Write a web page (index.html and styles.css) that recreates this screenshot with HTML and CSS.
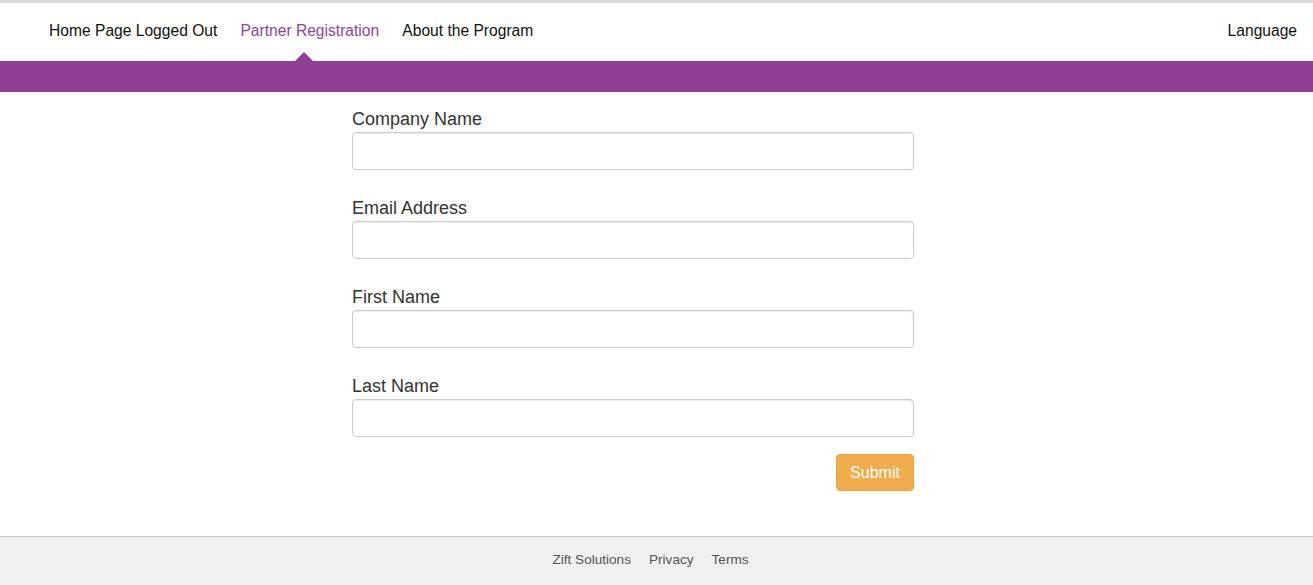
FILE: index.html
```html
<!DOCTYPE html>
<html lang="en">
<head>
<meta charset="utf-8">
<title>Partner Registration</title>
<link rel="stylesheet" href="styles.css">
</head>
<body>
<header class="topbar">
  <nav class="nav">
    <ul class="nav-left">
      <li><a class="nav-link" href="#">Home Page Logged Out</a></li>
      <li><a class="nav-link active" href="#">Partner Registration</a></li>
      <li><a class="nav-link" href="#">About the Program</a></li>
    </ul>
    <a class="nav-link lang" href="#">Language</a>
  </nav>
</header>
<div class="band"></div>
<main class="main">
  <form class="form">
    <div class="group">
      <label class="label" for="company">Company Name</label>
      <input class="input" id="company" type="text">
    </div>
    <div class="group">
      <label class="label" for="email">Email Address</label>
      <input class="input" id="email" type="email">
    </div>
    <div class="group">
      <label class="label" for="first">First Name</label>
      <input class="input" id="first" type="text">
    </div>
    <div class="group">
      <label class="label" for="last">Last Name</label>
      <input class="input" id="last" type="text">
    </div>
    <div class="actions">
      <button class="btn" type="button">Submit</button>
    </div>
  </form>
</main>
<footer class="footer">
  <a href="#">Zift Solutions</a>
  <a href="#">Privacy</a>
  <a href="#">Terms</a>
</footer>
</body>
</html>
```

FILE: styles.css
```css
* { box-sizing: border-box; }
html, body { margin: 0; padding: 0; }
body {
  font-family: "Liberation Sans", Arial, sans-serif;
  background: #fff;
  color: #333;
  width: 1313px;
  height: 585px;
  overflow: hidden;
}
a { text-decoration: none; }

.topbar {
  border-top: 3px solid #dcdcdc;
  height: 61px;
  background: #fff;
}
.nav {
  display: flex;
  align-items: stretch;
  justify-content: space-between;
  height: 58px;
  padding: 0 16px 0 37.5px;
}
.nav-left {
  display: flex;
  list-style: none;
  margin: 0;
  padding: 0;
}
.nav-link {
  position: relative;
  display: block;
  font-size: 15.6px;
  line-height: 56px;
  padding: 0 11.6px 2px;
  color: #111;
}
.nav-link.active { color: #8f4597; }
.nav-link.active::after {
  content: "";
  position: absolute;
  left: 50%;
  bottom: 0;
  margin-left: -15px;
  border-left: 9px solid transparent;
  border-right: 9px solid transparent;
  border-bottom: 9px solid #8f3f96;
}
.lang { padding-right: 0; }

.band {
  height: 31px;
  background: #8f3f96;
}

.main { padding: 17px 0 45px 352px; }
.form { width: 562px; }
.group + .group { margin-top: 28px; }
.label {
  display: block;
  font-size: 18px;
  line-height: 20px;
  color: #333;
  margin-bottom: 3px;
}
.input {
  display: block;
  width: 100%;
  height: 38px;
  border: 1px solid #ccc;
  border-radius: 4px;
  box-shadow: inset 0 1px 1px rgba(0,0,0,0.075);
  font: inherit;
  padding: 6px 12px;
}
.actions {
  display: flex;
  justify-content: flex-end;
  margin-top: 17px;
}
.btn {
  display: block;
  width: 78px;
  height: 37px;
  background: #f0ad4e;
  border: 1px solid #eea236;
  border-radius: 4px;
  color: #fff;
  font-family: "Liberation Sans", Arial, sans-serif;
  font-size: 16px;
}

.footer {
  border-top: 1px solid #c8c8c8;
  background: #f0f0f0;
  height: 49px;
  padding: 0 12px 4px 0;
  display: flex;
  justify-content: center;
  align-items: center;
  gap: 18px;
}
.footer a {
  font-size: 13.6px;
  color: #555;
}
```
